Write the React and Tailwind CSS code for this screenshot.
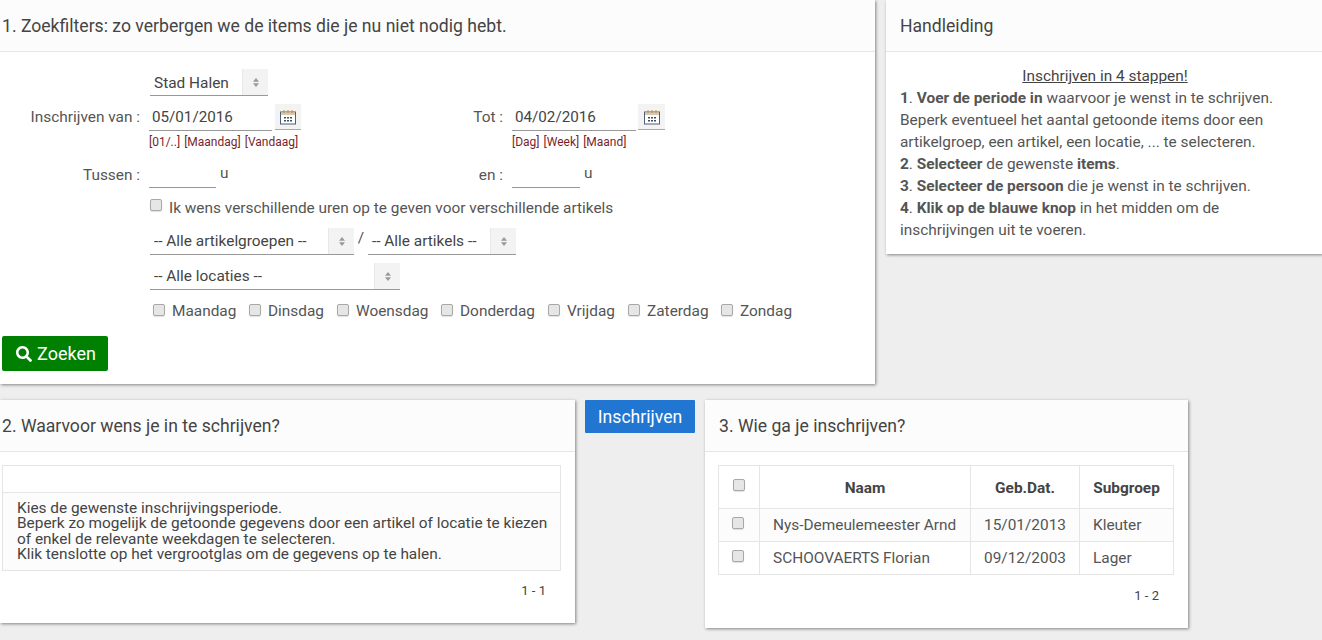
import { FaSearch } from "react-icons/fa";

const font = { fontFamily: "Roboto, sans-serif" };

function Card({ title, className, pad, children }) {
  return (
    <div className={`bg-white shadow-[1px_1px_3px_rgba(0,0,0,0.45)] ${className}`}>
      <div className={`h-[52px] bg-[#fcfcfc] border-b border-[#e5e5e5] text-[17.6px] leading-[53px] text-[#444] ${pad}`}>
        {title}
      </div>
      <div className={pad}>{children}</div>
    </div>
  );
}

function Check({ className = "" }) {
  return (
    <input
      type="checkbox"
      className={`appearance-none block shrink-0 w-[12px] h-[12px] rounded-[2px] border border-[#a8a8a8] bg-[#e6e6e6] shadow-[0_1px_1px_rgba(0,0,0,0.12)] ${className}`}
    />
  );
}

function Sorter() {
  return (
    <svg width="6" height="9" viewBox="0 0 6 9" className="fill-[#999]">
      <path d="M3 0 6 3.7H0z" />
      <path d="M3 9 0 5.3h6z" />
    </svg>
  );
}

function Select({ label, width, leading = "leading-[27px]" }) {
  return (
    <div className={`flex h-[27px] ${width} border-b border-[#999]`}>
      <div className={`flex-1 pl-[4px] text-[15.4px] ${leading} text-[#444] whitespace-nowrap overflow-hidden`}>
        {label}
      </div>
      <div className="w-[26px] flex items-center justify-center bg-[#f3f3f3] border-l border-[#e8e8e8]">
        <Sorter />
      </div>
    </div>
  );
}

function Calendar({ width }) {
  return (
    <button className={`${width} h-[26px] flex items-center justify-center bg-[#f3f3f3] border-b border-[#aaa]`}>
      <svg width="16" height="16" viewBox="0 0 16 16" fill="none">
        <rect x="0.5" y="3" width="15" height="12" fill="#fff" stroke="#4f5f78" />
        <rect x="1" y="3.5" width="14" height="2.5" fill="#d9c9a8" />
        <path d="M4 1v3M8 1v3M12 1v3" stroke="#c8873a" />
        <path d="M4 8h2v1.5H4zM7 8h2v1.5H7zM10 8h2v1.5h-2zM4 11h2v1.5H4zM7 11h2v1.5H7zM10 11h2v1.5h-2z" fill="#3f4d63" />
      </svg>
    </button>
  );
}

function DateField({ label, value, links, labelWidth, inputWidth, gap, calWidth }) {
  return (
    <div className="flex">
      <div className={`${labelWidth} text-right text-[15.4px] leading-[26px] text-[#555] whitespace-nowrap`}>{label}</div>
      <div className="ml-[9px]">
        <div className={`flex ${gap}`}>
          <div className={`${inputWidth} h-[27px] border-b border-[#999] pl-[3px] text-[15.2px] leading-[26px] text-[#444]`}>
            {value}
          </div>
          <Calendar width={calWidth} />
        </div>
        <div className="mt-[2px] flex gap-[4px] text-[12px] leading-[18px] text-[#7a1f2b] whitespace-nowrap">
          {links.map((l) => (
            <span key={l}>{l}</span>
          ))}
        </div>
      </div>
    </div>
  );
}

function HourField({ label, labelWidth, inputWidth }) {
  return (
    <div className="flex h-[29px]">
      <div className={`${labelWidth} text-right text-[15.4px] leading-[30px] text-[#555]`}>{label}</div>
      <div className={`ml-[9px] ${inputWidth} h-[28px] border-b border-[#999]`} />
      <div className="ml-[4px] text-[15.4px] leading-[27px] text-[#555]">u</div>
    </div>
  );
}

const days = [
  ["Maandag", "w-[96px]"],
  ["Dinsdag", "w-[88px]"],
  ["Woensdag", "w-[104px]"],
  ["Donderdag", "w-[107px]"],
  ["Vrijdag", "w-[80px]"],
  ["Zaterdag", "w-[93px]"],
  ["Zondag", "w-[80px]"],
];

function Filters() {
  return (
    <Card title="1. Zoekfilters: zo verbergen we de items die je nu niet nodig hebt." className="w-[875px] h-[384px]" pad="pl-[2px]">
      <div className="pt-[17px]">
        <div className="ml-[148px]">
          <Select label="Stad Halen" width="w-[118px]" leading="leading-[29px]" />
        </div>
        <div className="mt-[8px] flex">
          <div className="w-[370px]">
            <DateField label="Inschrijven van :" value="05/01/2016" links={["[01/..]", "[Maandag]", "[Vandaag]"]} labelWidth="w-[138px]" inputWidth="w-[123px]" gap="gap-[3px]" calWidth="w-[26px]" />
          </div>
          <DateField label="Tot :" value="04/02/2016" links={["[Dag]", "[Week]", "[Maand]"]} labelWidth="w-[131px]" inputWidth="w-[124px]" gap="gap-[2px]" calWidth="w-[27px]" />
        </div>
        <div className="mt-[9px] flex">
          <div className="w-[370px]">
            <HourField label="Tussen :" labelWidth="w-[138px]" inputWidth="w-[67px]" />
          </div>
          <HourField label="en :" labelWidth="w-[131px]" inputWidth="w-[68px]" />
        </div>
        <div className="mt-[10px] ml-[148px] flex items-center gap-[7px] h-[18px] text-[15.4px] leading-[20px] text-[#555]">
          <Check className="-mt-[7px]" />
          <span>Ik wens verschillende uren op te geven voor verschillende artikels</span>
        </div>
        <div className="mt-[11px] ml-[148px] flex">
          <Select label="-- Alle artikelgroepen --" width="w-[204px]" />
          <div className="w-[14px] text-center text-[15.4px] leading-[20px] text-[#555]">/</div>
          <Select label="-- Alle artikels --" width="w-[148px]" />
        </div>
        <div className="mt-[8px] ml-[148px]">
          <Select label="-- Alle locaties --" width="w-[250px]" />
        </div>
        <div className="mt-[11px] ml-[151px] flex h-[20px] text-[15.4px] leading-[20px] text-[#555]">
          {days.map(([d, w]) => (
            <div key={d} className={`flex gap-[7px] ${w}`}>
              <Check className="mt-[3px]" />
              <span>{d}</span>
            </div>
          ))}
        </div>
        <button className="mt-[15px] h-[35px] w-[106px] flex items-center justify-center gap-[5px] pl-[2px] rounded-[2px] bg-[#008000] text-[18px] text-white">
          <FaSearch size={16} />
          Zoeken
        </button>
      </div>
    </Card>
  );
}

function Manual() {
  return (
    <Card title="Handleiding" className="w-[436px] h-[254px]" pad="pl-[14px] pr-[12px]">
      <div className="pt-[13px] text-[15.4px] leading-[22px] text-[#555]">
        <div className="text-center underline text-[#444]">Inschrijven in 4 stappen!</div>
        <div className="whitespace-nowrap">
          <b>1</b>. <b>Voer de periode in</b> waarvoor je wenst in te schrijven.
          <br />
          Beperk eventueel het aantal getoonde items door een
          <br />
          artikelgroep, een artikel, een locatie, ... te selecteren.
          <br />
          <b>2</b>. <b>Selecteer</b> de gewenste <b>items</b>.
          <br />
          <b>3</b>. <b>Selecteer de persoon</b> die je wenst in te schrijven.
          <br />
          <b>4</b>. <b>Klik op de blauwe knop</b> in het midden om de
          <br />
          inschrijvingen uit te voeren.
        </div>
      </div>
    </Card>
  );
}

function Period() {
  return (
    <Card title="2. Waarvoor wens je in te schrijven?" className="w-[575px] h-[223px]" pad="pl-[2px]">
      <div className="mt-[13px] w-[559px] border border-[#e5e5e5]">
        <div className="h-[27px] border-b border-[#e5e5e5]" />
        <div className="h-[77px] bg-[#fcfcfc] pt-[8px] pl-[14px] text-[15.4px] leading-[15.4px] text-[#444] whitespace-nowrap">
          Kies de gewenste inschrijvingsperiode.
          <br />
          Beperk zo mogelijk de getoonde gegevens door een artikel of locatie te kiezen
          <br />
          of enkel de relevante weekdagen te selecteren.
          <br />
          Klik tenslotte op het vergrootglas om de gegevens op te halen.
        </div>
      </div>
      <div className="mt-[12px] w-[544px] text-right text-[13px] leading-[16px] text-[#444]">1 - 1</div>
    </Card>
  );
}

const people = [
  ["Nys-Demeulemeester Arnd", "15/01/2013", "Kleuter", "bg-[#fcfcfc]"],
  ["SCHOOVAERTS Florian", "09/12/2003", "Lager", ""],
];

function People() {
  return (
    <Card title="3. Wie ga je inschrijven?" className="w-[483px] h-[228px]" pad="pl-[14px]">
      <table className="mt-[13px] -ml-[1px] w-[454px] table-fixed border-collapse text-[15.4px] text-[#555]">
        <thead>
          <tr className="h-[43px]">
            <th className="w-[41px] border border-[#e5e5e5] align-middle">
              <Check className="mx-auto -mt-[4px]" />
            </th>
            <th className="w-[211px] border border-[#e5e5e5] pt-[4px] font-bold text-[#444]">Naam</th>
            <th className="w-[109px] border border-[#e5e5e5] pt-[4px] font-bold text-[#444]">Geb.Dat.</th>
            <th className="w-[94px] border border-[#e5e5e5] pt-[4px] font-bold text-[#444]">Subgroep</th>
          </tr>
        </thead>
        <tbody>
          {people.map(([name, date, group, bg]) => (
            <tr key={name} className={`h-[33px] ${bg}`}>
              <td className="border border-[#e5e5e5]">
                <Check className="mx-auto -mt-[4px] -translate-x-[1px]" />
              </td>
              <td className="border border-[#e5e5e5] pl-[13px] pt-[1px] whitespace-nowrap">{name}</td>
              <td className="border border-[#e5e5e5] pt-[1px] text-center">{date}</td>
              <td className="border border-[#e5e5e5] pl-[13px] pt-[1px]">{group}</td>
            </tr>
          ))}
        </tbody>
      </table>
      <div className="mt-[13px] w-[440px] text-right text-[13px] leading-[16px] text-[#444]">1 - 2</div>
    </Card>
  );
}

export default function App() {
  return (
    <div style={font} className="w-[1322px] h-[640px] overflow-hidden bg-[#eeeeee]">
      <div className="flex gap-[11px]">
        <Filters />
        <Manual />
      </div>
      <div className="mt-[16px] flex items-start">
        <Period />
        <button className="ml-[10px] w-[110px] h-[33px] pt-[1px] rounded-[1px] bg-[#2176d2] text-[17.6px] text-white">Inschrijven</button>
        <div className="ml-[10px]">
          <People />
        </div>
      </div>
    </div>
  );
}
